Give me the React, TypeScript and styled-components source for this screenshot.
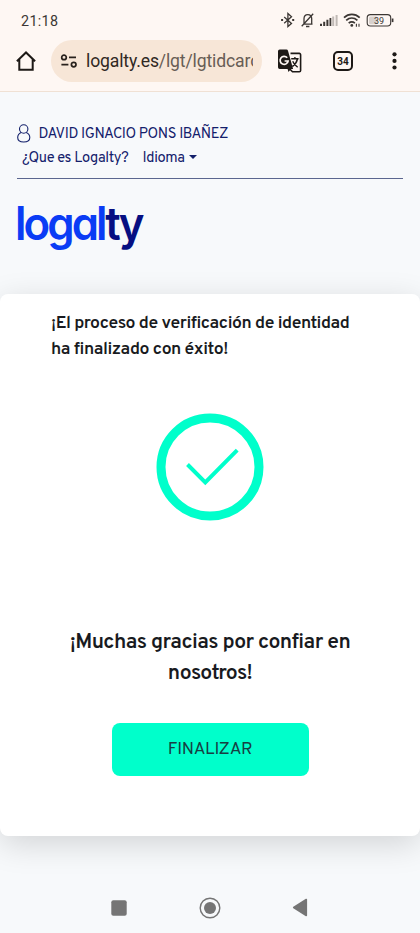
import React from "react";
import styled, { createGlobalStyle } from "styled-components";

const GlobalStyle = createGlobalStyle`
  *, *::before, *::after { box-sizing: border-box; }
  html, body, #root { margin: 0; height: 100%; }
  body { background: #f7f9fb; font-family: Overpass, Roboto, sans-serif; }
`;

const Screen = styled.div`
  width: 420px;
  height: 933px;
  display: flex;
  flex-direction: column;
  overflow: hidden;
  background: #f7f9fb;
`;

const BrowserChrome = styled.header`
  height: 92px;
  flex: none;
  background: #fef7f3;
  border-bottom: 1px solid #f0e1d4;
  font-family: Roboto, sans-serif;
`;

const StatusBar = styled.div`
  height: 40px;
  padding: 0 26px 0 21px;
  display: flex;
  align-items: center;
  justify-content: space-between;
`;

const Clock = styled.span`
  padding-top: 1px;
  font-size: 14.3px;
  letter-spacing: 0.35px;
  color: #3c3734;
`;

const AddressRow = styled.div`
  height: 42px;
  display: flex;
  align-items: center;
`;

const HomeIcon = styled.svg`
  margin: 0 15px 0 16px;
  flex: none;
`;

const AddressBar = styled.div`
  width: 211px;
  height: 42px;
  padding: 0 9px;
  border-radius: 21px;
  background: #f7e6d7;
  display: flex;
  align-items: center;
  flex: none;
`;

const Url = styled.div`
  width: 167px;
  margin-left: 8px;
  overflow: hidden;
  white-space: nowrap;
  font-size: 17.6px;
  letter-spacing: -0.14px;
  line-height: 24px;
  color: #685d55;
`;

const Domain = styled.span`
  color: #302823;
`;

const BarIcon = styled.svg<{ $gap: number }>`
  margin-left: ${(p) => p.$gap}px;
  flex: none;
`;

const TabCount = styled.div`
  width: 20px;
  height: 20px;
  margin-left: 31px;
  border: 2px solid #1d1916;
  border-radius: 5px;
  display: flex;
  align-items: center;
  justify-content: center;
  font-size: 10px;
  font-weight: 700;
  color: #1d1916;
`;

const SiteHeader = styled.div`
  height: 202px;
  flex: none;
  padding: 31px 17px 0;
  color: #13206b;
`;

const UserRow = styled.div`
  height: 20px;
  display: flex;
  align-items: center;
  gap: 7.5px;
`;

const UserName = styled.span`
  font-size: 14.6px;
  letter-spacing: -0.39px;
  line-height: 20px;
  padding-top: 4px;
`;

const LinkRow = styled.nav`
  height: 36px;
  padding: 6px 5px 0;
  display: flex;
  border-bottom: 1px solid #5b668f;
`;

const NavLink = styled.a<{ $gap?: number }>`
  margin-left: ${(p) => p.$gap ?? 0}px;
  font-size: 14.6px;
  letter-spacing: -0.35px;
  line-height: 20px;
  display: flex;
  align-items: center;
  height: 20px;
`;

const Caret = styled.i`
  margin: -5px 0 0 4px;
  border: 4px solid transparent;
  border-top-color: #13206b;
  border-bottom: 0;
`;

const Logo = styled.div`
  margin-top: 16px;
  width: 160px;
  height: 56px;
  transform: scaleX(0.94);
  transform-origin: left;
  font-family: Inter, sans-serif;
  font-feature-settings: "cv11";
  font-size: 46.5px;
  font-weight: 600;
  line-height: 56px;
  letter-spacing: -3.1px;
  white-space: nowrap;
  color: #0a3cf5;
  margin-left: -2px;
`;

const LogoAccent = styled.span`
  color: #060f82;
`;

const Card = styled.main`
  height: 542px;
  flex: none;
  padding: 17px 0 0;
  background: #fff;
  border-radius: 8px;
  box-shadow: 0 8px 32px rgba(0, 0, 0, 0.15);
  display: flex;
  flex-direction: column;
  align-items: center;
  color: #181a20;
`;

const Result = styled.h2`
  width: 318px;
  margin: 0;
  font-size: 17.6px;
  letter-spacing: -0.46px;
  line-height: 25.6px;
  font-weight: 600;
`;

const SuccessIcon = styled.svg`
  margin-top: 51px;
  flex: none;
`;

const Thanks = styled.p`
  width: 318px;
  margin: 106px 0 0;
  text-align: center;
  font-size: 21.2px;
  letter-spacing: -0.6px;
  line-height: 31px;
  font-weight: 600;
`;

const FinishButton = styled.button`
  width: 197px;
  height: 53px;
  margin: 34px 0 0;
  padding: 1px 0 0;
  border: 0;
  border-radius: 8px;
  background: #00ffcb;
  color: #173f43;
  font: 400 17.4px Overpass, Roboto, sans-serif;
  letter-spacing: -0.2px;
`;

const SystemNav = styled.footer`
  margin-top: auto;
  height: 51px;
  padding: 0 112px 0 111px;
  display: flex;
  align-items: center;
  justify-content: space-between;
`;

function StatusIcons() {
  return (
    <svg width="114" height="18" viewBox="280 11 114 18" fill="none" stroke="#3c3734" strokeWidth="1.3">
      <path d="M284.2 17 291.5 23.4 287.9 26.5V13.5L291.5 16.8 284.2 23.2" />
      <path d="M281.1 20h2M292.2 20h2" strokeWidth="1.9" />
      <path d="M303.3 24.2h9.2M304 24v-5.2c0-2.6 1.5-4.2 3.8-4.2 2.3 0 3.9 1.7 3.9 4.2V24M306 26.5h3.4M301.7 26.2 313.2 13.7" />
      <path d="M321 26v-2.2M324.2 26v-4.2M327.4 26v-6.2" strokeWidth="2" />
      <path d="M333.2 26v-9.5M336.6 26V15" strokeWidth="2" stroke="#c0b9b5" />
      <path d="M330.4 26v-8" strokeWidth="1.8" />
      <path d="M344 17.6c4.7-4.2 11-4.2 15.7 0M346.2 20.4c3.4-3 7.8-3 11.2 0M348.7 23.1c2-1.6 4.2-1.6 6.2 0" strokeWidth="1.8" />
      <circle cx="351.8" cy="25.4" r="1.4" fill="#3c3734" stroke="none" />
      <path d="M356.4 23.8v3M359 23.8v3" strokeWidth="1.1" />
      <rect x="367.2" y="14.6" width="23.5" height="11.4" rx="3.2" strokeWidth="1.1" />
      <rect x="369" y="16.4" width="8.5" height="7.8" rx="1.5" fill="#d8d1cd" stroke="none" />
      <path d="M392.6 18.5v3.6" strokeWidth="1.7" />
      <text x="379" y="23.6" textAnchor="middle" fontFamily="Roboto" fontSize="9" fill="#3c3734" stroke="none">39</text>
    </svg>
  );
}

function TranslateIcon() {
  return (
    <BarIcon $gap={15} width="25" height="24" viewBox="277 49 25 24">
      <path d="M290.5 53.4h8.8a1.3 1.3 0 0 1 1.3 1.3v15.7a1.3 1.3 0 0 1-1.3 1.3h-6.8l-3-3" fill="none" stroke="#1d1916" strokeWidth="1.6" />
      <path d="M279.7 49.5h6.7a1.7 1.7 0 0 1 1.6 1.2l5.1 18.3h-2.2l-2.4 3-.9-3h-7.9a1.7 1.7 0 0 1-1.7-1.7V51.2a1.7 1.7 0 0 1 1.7-1.7Z" fill="#1d1916" />
      <path d="M287.2 57.8a4 4 0 1 0 .9 3.2h-3.5" fill="none" stroke="#fef7f3" strokeWidth="1.7" />
      <path d="M291.2 58.8h7.4M294.9 57v1.8M297.5 59c-.8 3.4-3 6-5.2 7.6M292.7 61.2c1 2.5 3 4.6 5 6" fill="none" stroke="#1d1916" strokeWidth="1.4" />
    </BarIcon>
  );
}

export default function App() {
  return (
    <>
      <GlobalStyle />
      <Screen>
        <BrowserChrome>
          <StatusBar>
            <Clock>21:18</Clock>
            <StatusIcons />
          </StatusBar>
          <AddressRow>
            <HomeIcon width="20" height="20" viewBox="0 0 20 20" fill="none" stroke="#1d1916" strokeWidth="2">
              <path d="M.9 10.3 10 1.5l9.1 8.8M3.3 8.5v10.2h13.4V8.5" />
            </HomeIcon>
            <AddressBar>
              <svg width="18" height="14" viewBox="0 0 18 14" fill="none" stroke="#28211c" strokeWidth="1.7">
                <circle cx="4" cy="3.4" r="2.3" />
                <path d="M9 3.4h7M1.4 10.6h7" />
                <circle cx="13.7" cy="10.6" r="2.3" />
              </svg>
              <Url>
                <Domain>logalty.es</Domain>/lgt/lgtidcarc
              </Url>
            </AddressBar>
            <TranslateIcon />
            <TabCount>34</TabCount>
            <BarIcon $gap={39} width="5" height="18" viewBox="0 0 5 18" fill="#1d1916">
              <circle cx="2.5" cy="2.3" r="2.1" />
              <circle cx="2.5" cy="8.9" r="2.1" />
              <circle cx="2.5" cy="15.5" r="2.1" />
            </BarIcon>
          </AddressRow>
        </BrowserChrome>

        <SiteHeader>
          <UserRow>
            <svg width="14" height="19" viewBox="0 0 14 19" fill="none" stroke="#13206b" strokeWidth="1.1">
              <circle cx="6.7" cy="5" r="4.2" />
              <path d="M4.2 8.4C2 9.3.7 11.2.7 13.4c0 3 2.5 4.6 6 4.6s6.1-1.6 6.1-4.6c0-2.2-1.3-4.1-3.6-5" />
            </svg>
            <UserName>DAVID IGNACIO PONS IBAÑEZ</UserName>
          </UserRow>
          <LinkRow>
            <NavLink>¿Que es Logalty?</NavLink>
            <NavLink $gap={14}>
              Idioma
              <Caret />
            </NavLink>
          </LinkRow>
          <Logo>
            logal<LogoAccent>ty</LogoAccent>
          </Logo>
        </SiteHeader>

        <Card>
          <Result>¡El proceso de verificación de identidad ha finalizado con éxito!</Result>
          <SuccessIcon width="108" height="108" viewBox="0 0 108 108" fill="none" stroke="#00ffcb">
            <circle cx="54" cy="54" r="49" strokeWidth="9" />
            <path d="M31.5 51.5 49.3 69.3 81.2 37.2" strokeWidth="4" />
          </SuccessIcon>
          <Thanks>¡Muchas gracias por confiar en nosotros!</Thanks>
          <FinishButton>FINALIZAR</FinishButton>
        </Card>

        <SystemNav>
          <svg width="16" height="16" viewBox="0 0 16 16">
            <rect x=".3" y=".3" width="15.4" height="15.4" rx="2" fill="#757575" />
          </svg>
          <svg width="22" height="22" viewBox="0 0 22 22">
            <circle cx="11" cy="11" r="9.8" fill="none" stroke="#757575" strokeWidth="1.4" />
            <circle cx="11" cy="11" r="6" fill="#757575" />
          </svg>
          <svg width="16" height="19" viewBox="0 0 16 19">
            <path d="M14.3 1.5v16L1.7 9.5Z" fill="#757575" stroke="#757575" strokeWidth="1.6" strokeLinejoin="round" />
          </svg>
        </SystemNav>
      </Screen>
    </>
  );
}
